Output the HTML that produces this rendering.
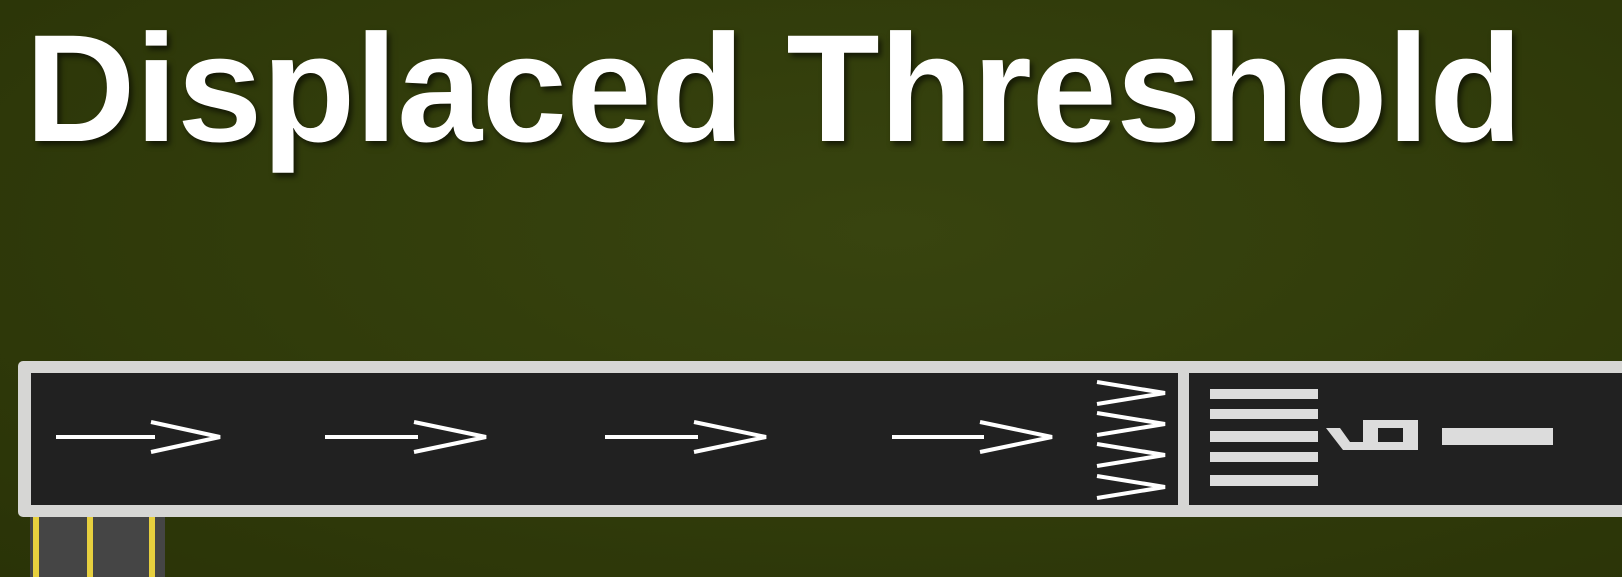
<!DOCTYPE html>
<html><head><style>
html,body{margin:0;padding:0}
body{width:1622px;height:577px;overflow:hidden;position:relative;
background:radial-gradient(ellipse at 55% 40%,#38440f 0%,#313c0b 50%,#2a3307 100%);}
.t{position:absolute;left:25px;top:12px;font-family:"Liberation Sans",sans-serif;font-weight:bold;font-size:153px;color:#fff;white-space:nowrap;line-height:1;letter-spacing:-0.4px;text-shadow:3px 4px 6px rgba(0,0,0,.6);}
</style></head><body>
<div class="t">Displaced Threshold</div>
<svg width="1622" height="577" style="position:absolute;left:0;top:0">
<rect x="30" y="514" width="135" height="70" fill="#454545"/>
<rect x="33" y="514" width="6" height="70" fill="#e6cf3e"/>
<rect x="87" y="514" width="6" height="70" fill="#e6cf3e"/>
<rect x="149" y="514" width="6" height="70" fill="#e6cf3e"/>
<rect x="18" y="361" width="1620" height="156" rx="5" fill="#d6d6d4"/>
<rect x="31" y="373" width="1600" height="132" fill="#212121"/>
<rect x="1178" y="366" width="11" height="146" fill="#d6d6d4"/>
<g stroke="#fff" stroke-width="4" fill="none">
<line x1="56" y1="437" x2="155" y2="437"/><polyline points="151,422 220,437 151,452"/>
<line x1="325" y1="437" x2="418" y2="437"/><polyline points="414,422 486,437 414,452"/>
<line x1="605" y1="437" x2="698" y2="437"/><polyline points="694,422 766,437 694,452"/>
<line x1="892" y1="437" x2="984" y2="437"/><polyline points="980,422 1052,437 980,452"/>
<polyline points="1097,382 1165,393 1097,404"/>
<polyline points="1097,413 1165,424 1097,435"/>
<polyline points="1097,444 1165,455 1097,466"/>
<polyline points="1097,476 1165,487 1097,498"/>
</g>
<g fill="#dcdcdc">
<rect x="1210" y="389" width="108" height="10"/>
<rect x="1210" y="409" width="108" height="10"/>
<rect x="1210" y="431" width="108" height="11"/>
<rect x="1210" y="452" width="108" height="10"/>
<rect x="1210" y="475" width="108" height="11"/>
<rect x="1442" y="428" width="111" height="17"/>
<path fill-rule="evenodd" d="M1326,428 L1340,428 L1350,442 L1363,442 L1363,420 L1418,420 L1418,450 L1343,450 Z M1378,428 L1403,428 L1403,442 L1378,442 Z"/>
</g>
</svg>
</body></html>
